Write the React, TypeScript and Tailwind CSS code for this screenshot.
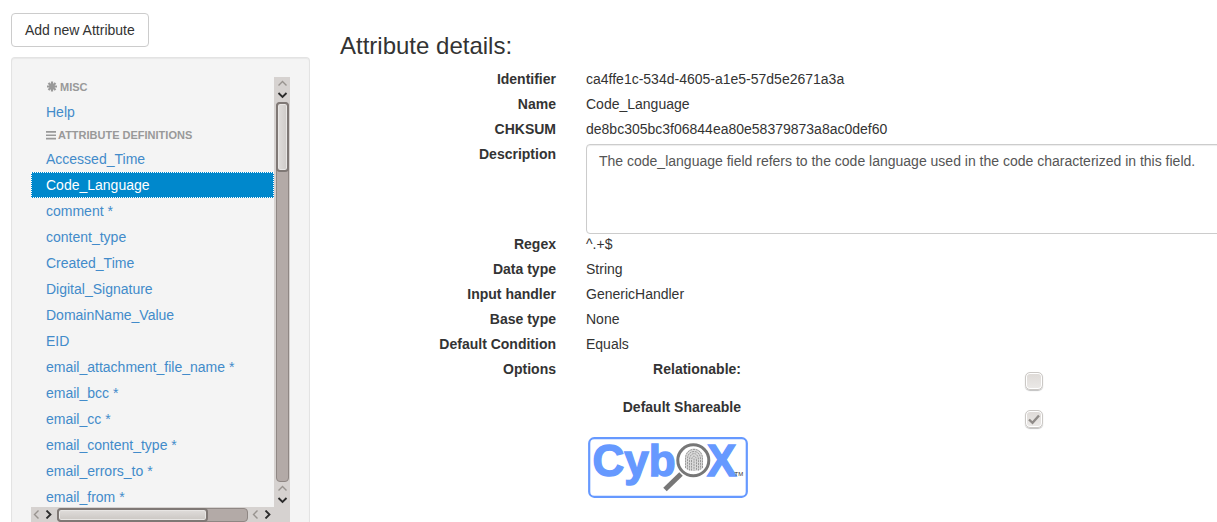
import type { ReactNode } from "react";

const attributes = [
  "Accessed_Time",
  "Code_Language",
  "comment *",
  "content_type",
  "Created_Time",
  "Digital_Signature",
  "DomainName_Value",
  "EID",
  "email_attachment_file_name *",
  "email_bcc *",
  "email_cc *",
  "email_content_type *",
  "email_errors_to *",
  "email_from *",
];

const selected = "Code_Language";

const arrowPaths = {
  up: "M1.5 6.5 L5.5 2.5 L9.5 6.5",
  down: "M1.5 2 L5.5 6 L9.5 2",
  left: "M6.5 0.5 L2.5 4.5 L6.5 8.5",
  right: "M2.5 0.5 L6.5 4.5 L2.5 8.5",
};

function Arrow({ direction, active = false }: { direction: keyof typeof arrowPaths; active?: boolean }) {
  const vertical = direction === "up" || direction === "down";
  return (
    <svg
      width={vertical ? 11 : 9}
      height={9}
      fill="none"
      stroke={active ? "#2b2b2b" : "#98938f"}
      strokeWidth={active ? 1.8 : 1.4}
      aria-hidden="true"
    >
      <path d={arrowPaths[direction]} />
    </svg>
  );
}

function AsteriskIcon() {
  return (
    <svg width="12" height="12" stroke="#999" strokeWidth="2.2" aria-hidden="true">
      <path d="M6 0.500 V10.500 M1 5.500 H11 M2.500 2 L9.500 9 M9.500 2 L2.500 9" />
    </svg>
  );
}

function ListIcon() {
  return (
    <svg width="10" height="10" fill="#999" aria-hidden="true">
      <path d="M0 1 H10 V2.700 H0 Z M0 4.400 H10 V6.100 H0 Z M0 7.800 H10 V9.500 H0 Z" />
    </svg>
  );
}

function VerticalScrollbar() {
  return (
    <div className="flex w-4 shrink-0 flex-col items-center bg-[#d6d2d0]" aria-hidden="true">
      <div className="flex h-[25px] flex-col items-center justify-around">
        <Arrow direction="up" />
        <Arrow direction="down" active />
      </div>
      <div className="w-[13px] flex-1 rounded border border-[#8f8784] bg-[#b3aaa7]">
        <div className="-mx-px -mt-px h-[70px] rounded border-2 border-[#7f7875] bg-linear-to-r from-[#e0dddb] to-[#cfcbc8] ring-1 ring-inset ring-[#e8e6e4]" />
      </div>
      <div className="flex h-[25px] flex-col items-center justify-around">
        <Arrow direction="up" />
        <Arrow direction="down" active />
      </div>
    </div>
  );
}

function HorizontalScrollbar() {
  return (
    <div className="flex h-[15px] shrink-0 items-center bg-[#d6d2d0] pr-4" aria-hidden="true">
      <div className="flex w-[26px] gap-[3px] pl-px">
        <Arrow direction="left" />
        <Arrow direction="right" active />
      </div>
      <div className="h-[14px] flex-1 rounded border border-[#8f8784] bg-[#b3aaa7]">
        <div className="-mt-px -ml-px h-[14px] w-4/5 rounded border-2 border-[#7f7875] bg-linear-to-b from-[#e0dddb] to-[#cbc7c3] ring-1 ring-inset ring-[#e8e6e4]" />
      </div>
      <div className="flex w-[26px] gap-[3px] pl-[3px]">
        <Arrow direction="left" />
        <Arrow direction="right" active />
      </div>
    </div>
  );
}

function ListHeading({ icon, children }: { icon: ReactNode; children: ReactNode }) {
  return (
    <h3 className="flex h-5 items-center gap-0.5 px-[15px] text-[11px] font-bold text-[#999] uppercase">
      {icon}
      {children}
    </h3>
  );
}

function ListLink({ name }: { name: string }) {
  const active = name === selected;
  return (
    <li>
      <a
        href="#"
        aria-current={active ? "page" : undefined}
        className={
          active
            ? "block bg-[#0088cc] px-[15px] py-[3px] whitespace-nowrap text-white outline-1 -outline-offset-1 outline-dotted outline-white"
            : "block px-[15px] py-[3px] whitespace-nowrap text-[#428bca]"
        }
      >
        {name}
      </a>
    </li>
  );
}

function Sidebar() {
  return (
    <aside className="flex w-[299px] shrink-0 flex-col">
      <button type="button" className="h-[34px] self-start rounded border border-[#ccc] bg-white px-[13px]">
        Add new Attribute
      </button>
      <nav className="mt-2.5 flex min-h-0 flex-1 flex-col rounded-t border border-b-0 border-[#e3e3e3] bg-[#f4f4f4] px-[19px] pt-[19px] shadow-[inset_0_1px_1px_rgba(0,0,0,0.05)]">
        <div className="flex min-h-0 flex-1">
          <div className="min-w-0 flex-1 overflow-hidden">
            <ListHeading icon={<AsteriskIcon />}>Misc</ListHeading>
            <ul className="pt-0.5">
              <ListLink name="Help" />
            </ul>
            <ListHeading icon={<ListIcon />}>Attribute definitions</ListHeading>
            <ul className="pt-px">
              {attributes.map((name) => (
                <ListLink key={name} name={name} />
              ))}
            </ul>
          </div>
          <VerticalScrollbar />
        </div>
        <HorizontalScrollbar />
      </nav>
    </aside>
  );
}

function Detail({ term, children }: { term: ReactNode; children: ReactNode }) {
  return (
    <div className="flex gap-[30px]">
      <dt className="w-[216px] shrink-0 text-right font-bold">{term}</dt>
      <dd className="min-w-0 flex-1">{children}</dd>
    </div>
  );
}

function Option({ id, label, checked = false }: { id: string; label: string; checked?: boolean }) {
  return (
    <div className="flex h-[38px] gap-[30px]">
      <label htmlFor={id} className="w-[155px] text-right font-bold">
        {label}
      </label>
      <div className="flex flex-1 justify-center pt-[13px]">
        <span className="relative size-[18px]">
          <input
            id={id}
            type="checkbox"
            defaultChecked={checked}
            className="block size-[18px] appearance-none rounded-[5px] border border-[#cbc8c5] bg-linear-to-b from-[#dedad7] to-[#ebe9e7] shadow-[0_1px_1px_rgba(0,0,0,0.25)] ring-1 ring-inset ring-white"
          />
          {checked && (
            <svg
              className="pointer-events-none absolute inset-0"
              width="18"
              height="18"
              fill="none"
              stroke="#8f8b88"
              strokeWidth="2.4"
              aria-hidden="true"
            >
              <path d="M4 9.500 L7.500 12.800 L14 5.500" />
            </svg>
          )}
        </span>
      </div>
    </div>
  );
}

function CyboxLogo() {
  return (
    <svg width="160" height="61" viewBox="0 0 160 61" role="img" aria-label="CybOX">
      <rect x="1.2" y="1.2" width="157.6" height="58.6" rx="5" fill="#fff" stroke="#6699ff" strokeWidth="2.2" />
      <g fill="#6699ff" stroke="#6699ff" strokeWidth="1.4" fontFamily="'Liberation Sans', Arial, sans-serif" fontWeight="700" fontSize="44">
        <text x="4.500" y="38.500">Cyb</text>
        <text x="119" y="38.500">X</text>
      </g>
      <path d="M93 37 L77 52.500" stroke="#777" strokeWidth="5" />
      <circle cx="105.300" cy="23.300" r="15.500" fill="#fff" stroke="#777" strokeWidth="3" />
      <path d="M97 31 V22 C97 8 115 8 115 22 V31 C112 35 100 35 97 31 Z" fill="#dadada" />
      <g fill="none" stroke="#888" strokeWidth="0.8" strokeDasharray="2 0.8">
        <path d="M97.500 31 V21 C98 9.500 114 9.500 114.500 21 V31" />
        <path d="M99.500 32.500 V22 C99.500 12 112.500 12 112.500 22 V32.500" />
        <path d="M101.500 33.500 V23 C101.500 14.500 110.500 14.500 110.500 23 V33.500" />
        <path d="M103.500 33.500 V24 C103.500 17.500 108.500 17.500 108.500 24 V33.500" />
        <path d="M106 21.500 V33.500" />
      </g>
      <text x="146.500" y="38.500" fill="#333" fontFamily="'Liberation Sans', Arial, sans-serif" fontSize="6">TM</text>
    </svg>
  );
}

export default function App() {
  return (
    <div className="flex h-screen gap-[30px] overflow-hidden bg-white pt-[13px] pl-[11px] font-['Liberation_Sans',Arial,sans-serif] text-[14px] leading-5 text-[#333]">
      <Sidebar />
      <main className="-mr-20 min-w-0 flex-1 pt-5">
        <h2 className="mb-2.5 text-[24px] leading-[26px]">Attribute details:</h2>
        <dl>
          <div className="flex flex-col gap-[5px] pb-[5px]">
            <Detail term="Identifier">ca4ffe1c-534d-4605-a1e5-57d5e2671a3a</Detail>
            <Detail term="Name">Code_Language</Detail>
            <Detail term="CHKSUM">de8bc305bc3f06844ea80e58379873a8ac0def60</Detail>
          </div>
          <Detail term={<label htmlFor="description">Description</label>}>
            <textarea
              id="description"
              readOnly
              defaultValue="The code_language field refers to the code language used in the code characterized in this field."
              className="block h-[90px] w-full resize-none rounded border border-[#ccc] bg-white px-3 py-1.5 text-[#555] shadow-[inset_0_1px_1px_rgba(0,0,0,0.075)]"
            />
          </Detail>
          <div className="flex flex-col gap-[5px]">
            <Detail term="Regex">^.+$</Detail>
            <Detail term="Data type">String</Detail>
            <Detail term="Input handler">GenericHandler</Detail>
            <Detail term="Base type">None</Detail>
            <Detail term="Default Condition">Equals</Detail>
            <Detail term="Options">
              <Option id="relationable" label="Relationable:" />
              <Option id="shareable" label="Default Shareable" checked />
              <div className="pt-0.5 pl-0.5">
                <CyboxLogo />
              </div>
            </Detail>
          </div>
        </dl>
      </main>
    </div>
  );
}
